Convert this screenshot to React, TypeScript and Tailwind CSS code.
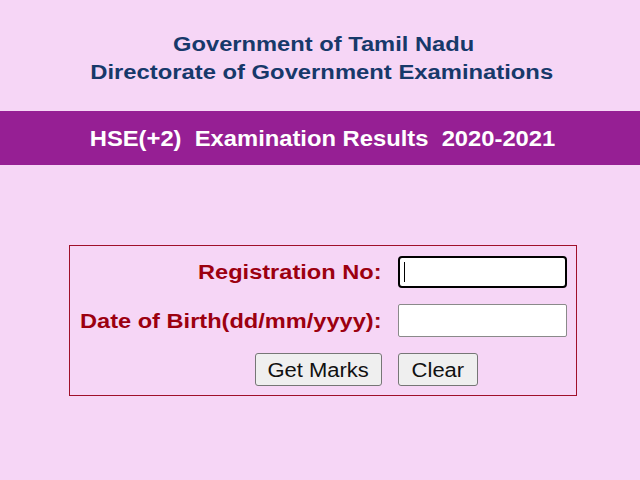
export default function App() {
  const font = { fontFamily: '"Liberation Sans", Arial, sans-serif' };
  return (
    <div className="w-[640px] h-[480px] bg-[#f6d6f6] overflow-hidden" style={font}>
      <div className="pt-[30px] flex flex-col items-center text-[#17396a] font-bold text-[20px] leading-[28px]">
        <div className="inline-block pl-[6px] scale-x-[1.185]">Government of Tamil Nadu</div>
        <div className="inline-block pl-[2px] scale-x-[1.19]">Directorate of Government Examinations</div>
      </div>
      <div className="mt-[25px] h-[54px] bg-[#961f94] flex items-center justify-center pl-[6px] text-white font-bold text-[22px] whitespace-pre">
        <span className="inline-block scale-x-[1.08]">HSE(+2)  Examination Results  2020-2021</span>
      </div>
      <div className="mt-[80px] ml-[69px] w-[508px] h-[151px] border border-[#a0102a] flex flex-col pt-[10px] pr-[9px]">
        <div className="grid grid-cols-[1fr_169px] gap-x-[16px] gap-y-[16px] items-center text-[#9c0010] font-bold text-[20px]">
          <div className="text-right">
            <span className="inline-block origin-right scale-x-[1.18]">Registration No:</span>
          </div>
          <div className="h-[32px] bg-white border-2 border-black rounded-[4px] flex items-center pl-[4px]">
            <div className="w-[1px] h-[20px] bg-black" />
          </div>
          <div className="text-right">
            <span className="inline-block origin-right scale-x-[1.18]">Date of Birth(dd/mm/yyyy):</span>
          </div>
          <div className="h-[33px] bg-white border border-[#8a8a8a] rounded-[2px]" />
          <div className="flex justify-end">
            <button className="w-[127px] h-[33px] bg-[#efefef] border border-[#767676] rounded-[3px] text-[#111] font-normal text-[20px]">
              <span className="inline-block scale-x-[1.1]">Get Marks</span>
            </button>
          </div>
          <div className="flex">
            <button className="w-[80px] h-[33px] bg-[#efefef] border border-[#767676] rounded-[3px] text-[#111] font-normal text-[20px]">
              <span className="inline-block scale-x-[1.1]">Clear</span>
            </button>
          </div>
        </div>
      </div>
    </div>
  );
}
